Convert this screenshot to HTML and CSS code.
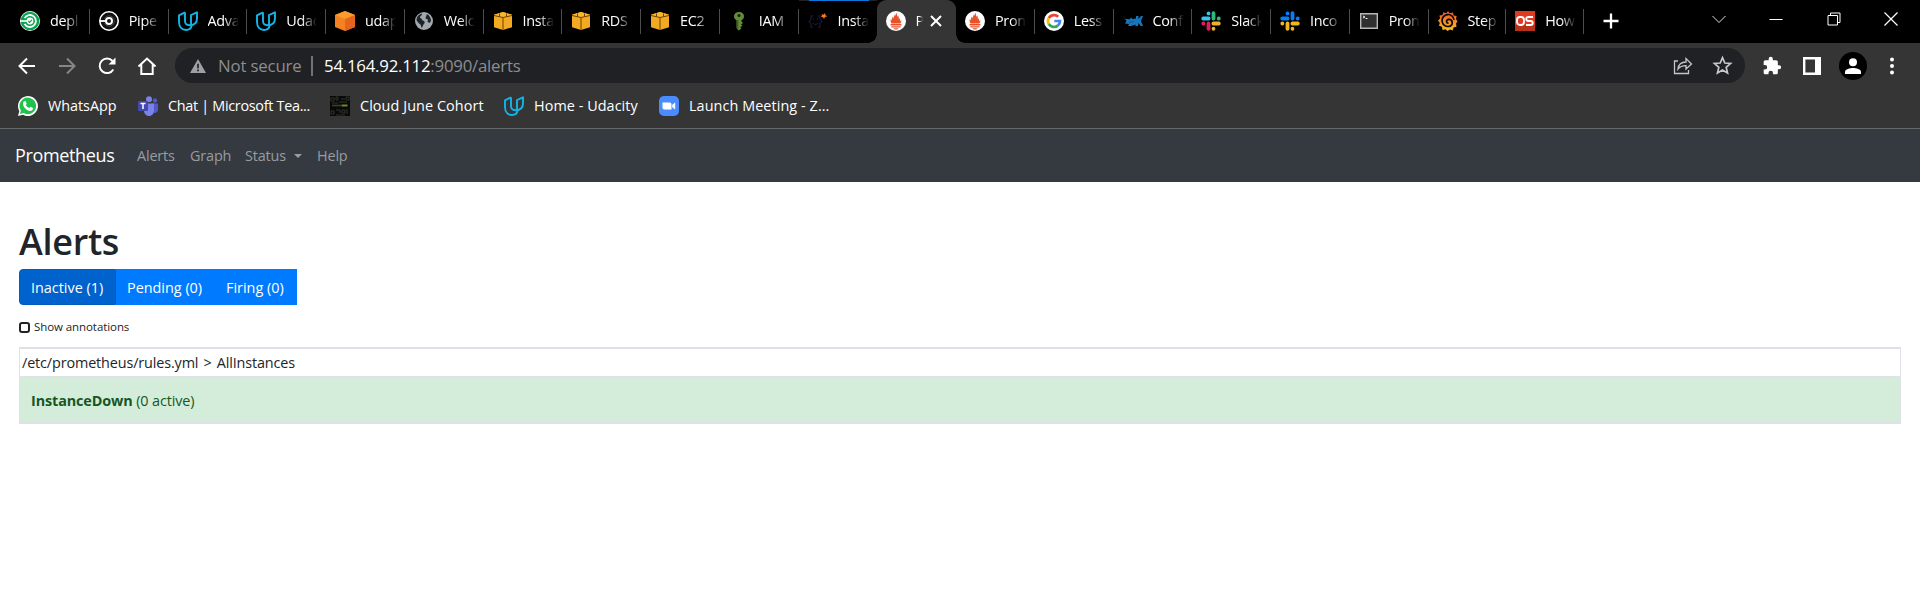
FILE: index.html
```html
<!DOCTYPE html>
<html lang="en">
<head>
<meta charset="utf-8">
<title>Prometheus Alerts</title>
<link rel="stylesheet" href="styles.css">
</head>
<body>
<svg class="defs" width="0" height="0" aria-hidden="true">
  <symbol id="udacity" viewBox="0 0 20 20"><path d="M7 1.300 1 4.300V11c0 5 3 8 7 8 3 0 5.300-1.500 5.800-4.800M7 1.300V10c0 2.500 1.500 4.200 4.500 4.200 4.500 0 7.500-2.200 7.500-6.700V1.300L13 4v8c0 .8.300 1.500.8 2.200" fill="none" stroke="#12b5ea" stroke-width="1.900" stroke-linejoin="round"/></symbol>
  <symbol id="aws" viewBox="0 0 20 20"><path d="M1 3.800 10 1l9 2.800v12.400L10 19l-9-2.800z" fill="#f3a922"/><path d="M1 3.800 10 1l9 2.800-9 2.400z" fill="#fbb72c"/><path d="m1 4.500 9 2 9-2M10 6.500v12.300M6.500 2.500v3M13.500 2.500v3" fill="none" stroke="#6b4508" stroke-width="1"/></symbol>
  <symbol id="prom" viewBox="0 0 20 20"><circle cx="10" cy="10" r="10" fill="#fff"/><path d="M5.600 12.500C4.600 11 4.300 9.500 4.800 8l1.200 1.600c-.2-1.800.2-3 1-4.100l.7 2.200c.1-2 .7-3.200 1.200-4.200l.5 1.600.7-3.400c1 1.500 1.200 3 1.200 4.300l.8-1.500c.8 1.400.9 2.700.7 4.200l.9-1.800c.6 1.500.5 2.600.1 3.600L15.300 9c.2 1.300-.2 2.500-1 3.500z" fill="#e6522c"/><path d="M4.600 13h10.800v1.600H4.600zM5.400 15.300h9.200v1.300H5.400zM7.300 17.200h5.400c-.5.900-1.500 1.300-2.700 1.300s-2.200-.4-2.700-1.300z" fill="#e6522c"/></symbol>
</svg>

<header class="browser">
  <div class="tabstrip">
    <div class="tab"><svg class="fav" viewBox="0 0 20 20"><circle cx="10" cy="10" r="10" fill="#fff"/><circle cx="10" cy="10" r="9.300" fill="#0aa34f"/><path d="M4.600 7.200a6 6 0 1 1 0 5.600" fill="none" stroke="#fff" stroke-width="1.800"/><path d="M0 10h7" stroke="#fff" stroke-width="1.600"/><circle cx="10" cy="10" r="3.400" fill="#fff"/><path d="m8.300 10 1.300 1.300 2.300-2.500" fill="none" stroke="#0aa34f" stroke-width="1.200"/></svg><span>depl</span></div>
    <div class="tab"><svg class="fav" viewBox="0 0 20 20"><circle cx="10" cy="10" r="9.200" fill="#111" stroke="#fff" stroke-width="1.600"/><path d="M5.500 7.700a5.200 5.200 0 1 1 0 4.600" fill="none" stroke="#777" stroke-width=".5"/><path d="M1 10h6" stroke="#fff" stroke-width="1.800"/><circle cx="10" cy="10" r="3" fill="#111" stroke="#fff" stroke-width="2"/></svg><span>Pipe</span></div>
    <div class="tab"><svg class="fav"><use href="#udacity"/></svg><span>Adva</span></div>
    <div class="tab"><svg class="fav"><use href="#udacity"/></svg><span>Udac</span></div>
    <div class="tab"><svg class="fav" viewBox="0 0 20 20"><path d="M10 0 20 4v12l-10 4L0 16V4z" fill="#f58220"/><path d="M10 0 20 4l-10 4L0 4z" fill="#fb9b2e"/><path d="M10 8 20 4v12l-10 4z" fill="#e8631c"/></svg><span>udap</span></div>
    <div class="tab"><svg class="fav" viewBox="0 0 20 20"><circle cx="10" cy="10" r="9" fill="#a2a8ae"/><path d="M8 2.500c0 2.500-1.500 2-2 3.500s2 1.200 2.200 2.800c.3 1.500 2.300.5 2.500 2.500.1 1.200-1.200 1.500-1.500 3L7.800 17c-1-1.500-.5-3.300-2-4S3.500 10.500 2.500 9C3 5 5.500 3 8 2.500zM13 3c2.500 1.500 4 4 4 7l-1.500 2-2-1.200L14 8.500l-2.500-1 .5-2z" fill="#20242a"/></svg><span>Welc</span></div>
    <div class="tab"><svg class="fav"><use href="#aws"/></svg><span>Insta</span></div>
    <div class="tab"><svg class="fav"><use href="#aws"/></svg><span>RDS</span></div>
    <div class="tab"><svg class="fav"><use href="#aws"/></svg><span>EC2</span></div>
    <div class="tab"><svg class="fav" viewBox="0 0 20 20"><path d="M10 1C7 1 5 2.700 5 5.200c0 2 1 3.300 2.500 4V17l2 2.500 3-2-1.300-1.200 2.300-1.500-1.500-1.300 2-1.500-1.500-1.500V9.200c1.500-.7 2.500-2 2.500-4C15 2.700 13 1 10 1z" fill="#648c3a"/><path d="M8.700 9v8.500" stroke="#3b5c24" stroke-width="1.200"/><circle cx="10" cy="4.500" r="1.600" fill="#17240e"/></svg><span>IAM</span></div>
    <div class="tab loading"><svg class="fav" viewBox="0 0 20 20"><path d="M5 5H3v3.500L1 10.500l2 2V16h2M10 5h2v3.500l2 2-2 2V16h-2M5 12c1.300 2 3.700 2 5 0M5.500 7.500v1.500M9.500 7.500v1.500" fill="none" stroke="#17172f" stroke-width="1.300"/><path d="m13.500 3 2 .7L17 2l.4 2 1.600 1.500-2 .5-1 2-1-1.800-2-.4 1-1.500z" fill="#f47b20"/></svg><span>Insta</span></div>
    <div class="tab active"><svg class="fav"><use href="#prom"/></svg><span>P</span><svg class="close" viewBox="0 0 12 12"><path d="m1 1 10 10M11 1 1 11" stroke="#fff" stroke-width="2"/></svg></div>
    <div class="tab"><svg class="fav"><use href="#prom"/></svg><span>Pron</span></div>
    <div class="tab"><svg class="fav" viewBox="0 0 20 20"><circle cx="10" cy="10" r="10" fill="#fff"/><g fill="none" stroke-width="2.700"><path d="M14.200 5.800A6 6 0 0 0 4.800 7" stroke="#ea4335"/><path d="M4.800 7a6 6 0 0 0 0 6" stroke="#fbbc05"/><path d="M4.800 13a6 6 0 0 0 9 1.600" stroke="#34a853"/><path d="M13.800 14.600A6 6 0 0 0 16 10h-5.700" stroke="#4285f4"/></g></svg><span>Less</span></div>
    <div class="tab"><svg class="fav" viewBox="0 0 20 20"><path d="m0 5 2.500 3L5 8l1.500.5L8 6.500 9.500 8 13 7.500V5h2.500v3L18 5h2l-2 5 2 5h-2.500l-2-3-.5 3h-2.500v-1.500L8 15H5l1-2-4-.5 1.500-2.500z" fill="#1676bb"/><path d="m6 11.500 5-1" stroke="#0d4e80" stroke-width=".8"/></svg><span>Conf</span></div>
    <div class="tab"><svg class="fav" viewBox="0 0 20 20"><g stroke-width="3.800" stroke-linecap="round"><path d="M2.200 7.500h5.400M7.500 2.300v.1" stroke="#36c5f0"/><path d="M12.500 2.200v5.400M17.700 7.500h.1" stroke="#2eb67d"/><path d="M12.400 12.500h5.400M12.500 17.700v.1" stroke="#ecb22e"/><path d="M7.500 12.400v5.400M2.300 12.500h.1" stroke="#e01e5a"/></g></svg><span>Slack</span></div>
    <div class="tab"><svg class="fav" viewBox="0 0 20 20"><g stroke-width="3.800" stroke-linecap="round"><path d="M2.200 7.500h5.400M7.500 2.300v.1M12.500 2.200v5.400M17.700 7.500h.1" stroke="#087df5"/><path d="M12.400 12.500h5.400M12.500 17.700v.1M7.500 12.400v5.400M2.300 12.500h.1" stroke="#f2b51d"/></g></svg><span>Inco</span></div>
    <div class="tab"><svg class="fav" viewBox="0 0 20 20"><path d="M1.700 2.700h16.600v14.600H1.700z" fill="#303030" stroke="#b8b8b8" stroke-width="1.400"/><path d="m4 5 2 1-2 1M6.500 7.500h2" fill="none" stroke="#eee"/></svg><span>Pron</span></div>
    <div class="tab narrow"><svg class="fav" viewBox="0 0 20 20"><defs><linearGradient id="gf" x2="0" y2="1"><stop stop-color="#f0512b"/><stop offset="1" stop-color="#fbc01e"/></linearGradient></defs><path d="m10 0 1.700 2.300L15 1.500l.6 3 3 .5-.6 3 1.500 2.500-1.500 2 .5 3.200-3 .7-.8 3-2.700-1L9.500 20l-2-1.800-3 .8-.5-3.200-3-1 .8-2.800L0 9.500l2-2L1.500 4.500l3-.5.8-2.800 3 1z" fill="url(#gf)"/><path d="M16 9a6 6 0 1 0-5.500 6.500c2.500-.2 4-2 3.700-4.200-.3-2-1.800-3-3.300-2.900-1.700.1-2.500 1.300-2.300 2.500.2 1 1 1.400 1.900 1.300" fill="none" stroke="#080400" stroke-width="1.700"/></svg><span>Step</span></div>
    <div class="tab narrow"><svg class="fav" viewBox="0 0 20 20"><path d="M0 0h20v20H0z" fill="#df3b20"/><path d="M0 14h20v6H0z" fill="#b9321b"/><rect x="2" y="6" width="7" height="8" rx="3" fill="none" stroke="#fff" stroke-width="1.800"/><path d="M18 6h-4.500c-3 0-3 4 0 4h2c3 0 3 4 0 4H11" fill="none" stroke="#fff" stroke-width="1.800"/></svg><span>How</span></div>
    <svg class="newtab" viewBox="0 0 16 16"><path d="M8 .5v15M.5 8h15" stroke="#fff" stroke-width="2.300"/></svg>
    <div class="window-controls">
      <svg viewBox="0 0 14 14"><path d="m.5 4 6.500 6.500L13.500 4" fill="none" stroke="#ddd"/></svg>
      <svg viewBox="0 0 14 14"><path d="M.5 7.500h13" stroke="#fff"/></svg>
      <svg viewBox="0 0 14 14"><path d="M1 3.500h9.500V13H1zM3.500 3V1H13v9.500h-2" fill="none" stroke="#fff"/></svg>
      <svg viewBox="0 0 14 14"><path d="m.5.5 13 13M13.500.5l-13 13" stroke="#fff" stroke-width="1.200"/></svg>
    </div>
  </div>

  <div class="toolbar">
    <div class="nav-icons">
      <svg viewBox="0 0 20 20"><path d="M18 10H3M10 2.500 2.500 10l7.500 7.500" fill="none" stroke="#fff" stroke-width="2"/></svg>
      <svg viewBox="0 0 20 20"><path d="M2 10h15M10 2.500l7.500 7.500-7.500 7.500" fill="none" stroke="#868686" stroke-width="2"/></svg>
      <svg viewBox="0 0 20 20"><path d="M16.300 13.500A7.300 7.300 0 1 1 15.500 5" fill="none" stroke="#fff" stroke-width="2"/><path d="M18.500 1.500v7h-7z" fill="#fff"/></svg>
      <svg viewBox="0 0 20 20"><path d="M1.500 10.500 10 2.500l8.500 8M4.300 8v10h11.400V8" fill="none" stroke="#fff" stroke-width="2"/></svg>
    </div>
    <div class="omnibox">
      <svg class="warn" viewBox="0 0 16 14"><path d="M8 0l8 14H0z" fill="#9aa0a6"/><path d="M8 4.800v4.400M8 10.500v1.700" stroke="#202124" stroke-width="1.700"/></svg>
      <span class="insecure">Not secure</span>
      <span class="divider"></span>
      <span class="url"><b>54.164.92.112</b>:9090/alerts</span>
      <svg class="share" viewBox="0 0 20 20"><path d="M5 5H1.500v12.500h14V14M5 13c.5-4.500 3-7 8-7V2.500L18.500 8 13 13V9.700c-3.500 0-6 .8-8 3.300z" fill="none" stroke="#c4c7c5" stroke-width="1.300"/></svg>
      <svg class="star" viewBox="0 0 20 20"><path d="m10 2.500 2.200 5.100 5.500.5-4.200 3.600 1.300 5.400-4.800-2.900-4.800 2.900 1.300-5.400L2.300 8.100l5.500-.5z" fill="none" stroke="#c8c8c8" stroke-width="1.600"/></svg>
    </div>
    <div class="actions">
      <svg class="puzzle" viewBox="0 0 24 24"><path d="M20.500 11H19V7c0-1.100-.9-2-2-2h-4V3.500a2.500 2.500 0 0 0-5 0V5H4c-1.100 0-2 .9-2 2v3.800h1.500a2.700 2.700 0 0 1 0 5.400H2V20c0 1.100.9 2 2 2h3.800v-1.500a2.700 2.700 0 0 1 5.400 0V22H17c1.100 0 2-.9 2-2v-4h1.500a2.500 2.500 0 0 0 0-5z" fill="#fff"/></svg>
      <svg class="panel" viewBox="0 0 18 18"><path d="M1.200 1.200h15.600v15.600H1.200z" fill="none" stroke="#fff" stroke-width="2.400"/><path d="M12 1h5v16h-5z" fill="#fff"/></svg>
      <svg class="profile" viewBox="0 0 28 28"><circle cx="14" cy="14" r="14"/><circle cx="14" cy="10.300" r="4" fill="#fff"/><path d="M6 22v-2c0-3 5-4 8-4s8 1 8 4v2z" fill="#fff"/></svg>
      <svg class="menu" viewBox="0 0 4 18"><g fill="#fff"><circle cx="2" cy="2.500" r="2"/><circle cx="2" cy="9" r="2"/><circle cx="2" cy="15.500" r="2"/></g></svg>
    </div>
  </div>

  <nav class="bookmarks">
    <a class="bm-whatsapp"><svg class="fav" viewBox="0 0 20 20"><path d="M0 20 1.300 15A10 10 0 1 1 5 18.700z" fill="#fff"/><path d="M2 18l.9-3.400a8.300 8.300 0 1 1 2.700 2.500z" fill="#1fc24c"/><path d="M6 5.200 7.500 5l1.200 2.800-.9 1.300c.8 1.500 2 2.500 3.400 3l1.200-1.300 2.600 1.300c.1 2-1.400 2.900-3 2.900-3-.2-7-4-7-7.200 0-1.200.4-2 1-2.600z" fill="#fff"/></svg><span>WhatsApp</span></a>
    <a class="bm-teams"><svg class="fav" viewBox="0 0 20 20"><circle cx="17" cy="4.500" r="2.200" fill="#5059c9"/><circle cx="11" cy="3.300" r="3" fill="#7b83eb"/><path d="M13 7.500h7v6c0 2-1.500 3.500-4 3.500z" fill="#5059c9"/><path d="M6 7.500h10v7c0 3-2 5.500-5 5.500s-5-2.500-5-5.500z" fill="#7b83eb"/><rect y="5" width="10" height="10" rx="1" fill="#4349ae"/><path d="M2.500 7.500h5M5 7.500v5.500" stroke="#fff" stroke-width="1.500"/></svg><span>Chat | Microsoft Tea...</span></a>
    <a class="bm-cloud"><svg class="fav" viewBox="0 0 20 20"><path d="M0 0h20v20H0z" fill="#090a08"/><path d="M1 2h3v3H1zM6 1h2v3H6zM11 3h4M16 1h3v3h-3zM2 7h6M1 15h3v3H1zM6 14h4v3M12 14h3v3h-3zM17 13v5M9 6h8M6 19h9" fill="none" stroke="#30332d" stroke-width="1"/><path d="M2 9.500h9" stroke="#3a3d35" stroke-width="1.600"/><path d="M11.500 9.500h6" stroke="#6c882d" stroke-width="2"/></svg><span>Cloud June Cohort</span></a>
    <a class="bm-udacity"><svg class="fav"><use href="#udacity"/></svg><span>Home - Udacity</span></a>
    <a class="bm-zoom"><svg class="fav" viewBox="0 0 20 20"><rect width="20" height="20" rx="5" fill="#4a8cff"/><path d="M3.500 6.500h7c1.300 0 2 .8 2 2v5h-7c-1.300 0-2-.8-2-2zM13.200 8.800l3-2.200v6.800l-3-2.200z" fill="#fff"/></svg><span>Launch Meeting - Z...</span></a>
  </nav>
</header>

<nav class="navbar">
  <a class="brand">Prometheus</a>
  <a class="nav-alerts">Alerts</a>
  <a class="nav-graph">Graph</a>
  <a class="nav-status">Status<i class="caret"></i></a>
  <a class="nav-help">Help</a>
</nav>

<main class="page">
  <h1>Alerts</h1>
  <div class="btn-group">
    <button class="btn selected">Inactive (1)</button>
    <button class="btn pending">Pending (0)</button>
    <button class="btn firing">Firing (0)</button>
  </div>
  <div class="annotations"><span class="checkbox"></span><span>Show annotations</span></div>
  <section class="rules">
    <div class="rule-file">/etc/prometheus/rules.yml &gt; AllInstances</div>
    <div class="alert-row"><b>InstanceDown</b> <span>(0 active)</span></div>
  </section>
</main>
</body>
</html>
```
FILE: styles.css
```css
* { box-sizing: border-box; }
body {
  margin: 0;
  height: 613px;
  overflow: hidden;
  background: #fff;
  color: #212529;
  font-family: "Open Sans", "Noto Sans", sans-serif;
  font-size: 14.4px;
}
svg { display: block; flex: none; }
.defs { position: absolute; }
.browser { height: 129px; background: #353535; border-bottom: 1px solid #66686a; color: #fff; }
.fav { width: 20px; height: 20px; flex: none; }

.tabstrip { display: flex; height: 43px; background: #000; padding-left: 11px; }
.tab {
  position: relative;
  display: flex;
  flex: none;
  align-items: center;
  width: 78.75px;
  padding: 0 0 1px 9px;
  gap: 10px;
}
.tab.narrow { width: 77.7px; }
.tab > span {
  width: 38px;
  padding-bottom: 1px;
  white-space: nowrap;
  letter-spacing: -.3px;
  -webkit-mask-image: linear-gradient(90deg, #000 16px, transparent 31px);
  mask-image: linear-gradient(90deg, #000 16px, transparent 31px);
}
.tab::after {
  content: "";
  position: absolute;
  right: 0;
  top: 9px;
  width: 1px;
  height: 25px;
  background: #4d4d4d;
}
.tab.loading { box-shadow: inset 0 1px #222; }
.tab.loading::before { content: ""; position: absolute; left: 10px; top: 0; width: 60px; height: 1px; background: #0b78d8; }
.tab.loading::after, .tab.active::after { display: none; }
.tab.active { width: 79px; margin: 0 .5px 0 -.75px; background: #353535; border-radius: 9px 9px 0 0; }
.tab.active::before {
  content: "";
  position: absolute;
  inset: auto -9px 0;
  height: 9px;
  background:
    radial-gradient(circle at 0 0, transparent 8.5px, #353535 9px) left / 9px 9px no-repeat,
    radial-gradient(circle at 100% 0, transparent 8.5px, #353535 9px) right / 9px 9px no-repeat;
}
.tab.active > span {
  width: 9px;
  -webkit-mask-image: linear-gradient(90deg, #000 3px, transparent 7px);
  mask-image: linear-gradient(90deg, #000 3px, transparent 7px);
}
.close { width: 12px; height: 12px; margin-left: -5px; }
.newtab { width: 16px; height: 16px; margin: 13px 0 0 19px; }
.window-controls { display: flex; gap: 43.500px; margin: 12px 22px 0 auto; }
.window-controls svg { width: 14px; height: 14px; }

.toolbar { display: flex; align-items: center; height: 45px; padding: 0 20px 0 17px; }
.nav-icons { display: flex; gap: 20px; width: 158px; }
.nav-icons svg { width: 20px; height: 20px; }
.omnibox {
  display: flex;
  align-items: center;
  width: 1570px;
  height: 35px;
  padding: 0 12px 0 15px;
  border-radius: 18px;
  background: #202124;
  font-size: 16.8px;
  color: #8b8e92;
}
.warn { width: 16px; height: 14px; }
.insecure { width: 93px; margin-left: 12px; white-space: nowrap; letter-spacing: -.15px; }
.divider { width: 2px; height: 20px; background: #717377; }
.url { margin-left: 11px; letter-spacing: -.22px; }
.url b { font-weight: 400; color: #fff; }
.share { width: 20px; height: 20px; margin-left: auto; }
.star { width: 21px; height: 21px; margin-left: 19px; }
.actions { display: flex; align-items: center; flex: 1; padding-left: 17px; }
.puzzle { width: 20px; height: 20px; }
.panel { width: 18px; height: 18px; margin-left: 21px; }
.profile { width: 28px; height: 28px; margin-left: 18px; }
.menu { width: 4px; height: 18px; margin-left: 23px; }

.bookmarks { display: flex; height: 36px; padding-left: 18px; }
.bookmarks a { display: flex; align-items: center; gap: 10px; white-space: nowrap; }
.bookmarks span { padding-bottom: 2px; }
.bm-whatsapp { width: 120px; letter-spacing: -.03px; }
.bm-teams { width: 192px; letter-spacing: -.3px; }
.bm-cloud { width: 174px; letter-spacing: .08px; }
.bm-udacity { width: 155px; letter-spacing: .06px; }
.bm-zoom { letter-spacing: .08px; }

.navbar { display: flex; align-items: center; height: 53px; padding-left: 15px; background: #343a40; color: #999ca0; }
.navbar a { white-space: nowrap; letter-spacing: -.15px; }
.navbar .brand { width: 122px; padding-bottom: 1px; color: #fff; font-size: 18px; letter-spacing: -.35px; }
.nav-alerts { width: 53px; }
.nav-graph { width: 55px; }
.nav-status { display: flex; align-items: center; width: 72px; }
.caret { margin-left: 8px; border: 4.500px solid transparent; border-top-color: #999ca0; border-bottom: 0; }

.page { padding: 37px 19px 0; }
h1 { margin: 0 0 5px; font-size: 36px; line-height: 45px; font-weight: 600; letter-spacing: -.3px; }
.btn-group { display: flex; height: 36px; }
.btn {
  width: 99px;
  height: 36px;
  padding: 0 0 0 11px;
  border: 0;
  background: #007bff;
  color: #fff;
  font: inherit;
  letter-spacing: 0;
  text-align: left;
}
.btn.selected { width: 97px; background: #0062cc; border: 1px solid #005cbf; border-radius: 4px 0 0 4px; }
.btn.firing { width: 82px; }
.annotations { display: flex; align-items: center; gap: 4px; height: 16px; margin-top: 13px; font-size: 11.500px; letter-spacing: -.08px; }
.checkbox { width: 11px; height: 11px; border: 2px solid #222; border-radius: 3px; margin-top: 2px; }
.rules { height: 77px; margin-top: 13px; border: 1px solid #dee2e6; border-width: 2px 1px; }
.rule-file { height: 28px; padding-left: 2px; line-height: 28px; border-bottom: 1px solid #dee2e6; letter-spacing: -.13px; word-spacing: 1.500px; }
.alert-row { height: 45px; padding-left: 11px; line-height: 47px; background: #d4edda; color: #155724; letter-spacing: -.12px; }
```
